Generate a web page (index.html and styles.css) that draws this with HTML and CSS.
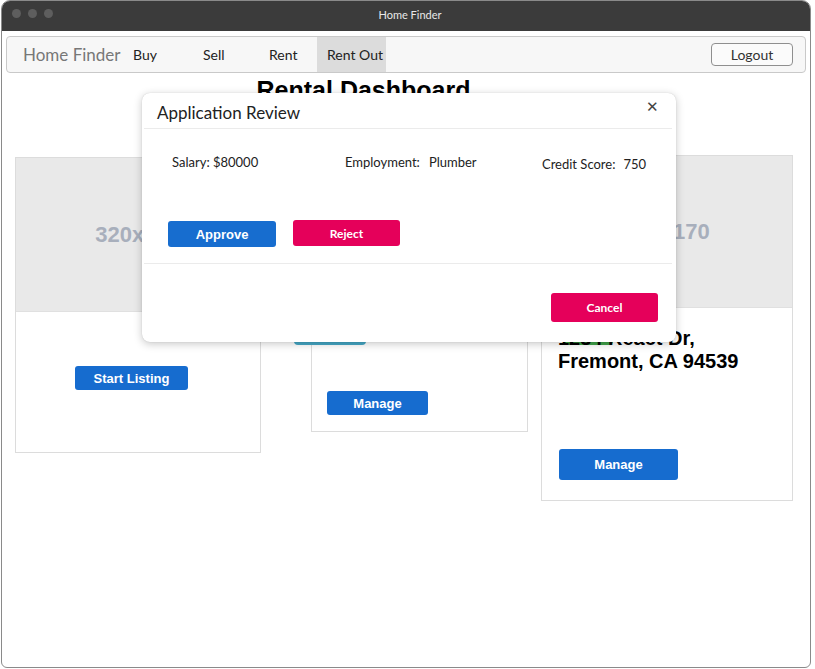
FILE: index.html
```html
<!DOCTYPE html>
<html>
<head>
<meta charset="utf-8">
<title>Home Finder</title>
<link rel="stylesheet" href="styles.css">
</head>
<body>
<div class="window">
  <div class="titlebar">
    <div class="dots"><span></span><span></span><span></span></div>
    <div class="wtitle">Home Finder</div>
  </div>
  <div class="app">
    <nav class="navbar">
      <span class="brand">Home Finder</span>
      <ul class="links">
        <li class="l-buy">Buy</li>
        <li class="l-sell">Sell</li>
        <li class="l-rent">Rent</li>
        <li class="l-out active">Rent Out</li>
      </ul>
      <button class="logout">Logout</button>
    </nav>
    <main class="dash">
      <h1 class="heading">Rental Dashboard</h1>
      <div class="cards">
        <div class="card c1">
          <div class="ph">320x170</div>
          <div class="cbody b1"><button class="btn blue sl">Start Listing</button></div>
        </div>
        <div class="card c2">
          <div class="ph">320x170</div>
          <span class="badge cyan"></span>
          <div class="cbody b2"><button class="btn blue mg">Manage</button></div>
        </div>
        <div class="card c3">
          <div class="ph ph3">320x170</div>
          <span class="badge green"></span>
          <div class="cbody b3">
            <div class="addr">1234 React Dr,<br>Fremont, CA 94539</div>
            <button class="btn blue mg3">Manage</button>
          </div>
        </div>
      </div>
    </main>
    <div class="modal">
      <div class="mhead">
        <span class="mtitle">Application Review</span>
        <span class="close">&#x2715;</span>
      </div>
      <div class="mbody">
        <div class="info">
          <span class="f1">Salary: $80000</span>
          <span class="f2">Employment:<span class="val">Plumber</span></span>
          <span class="f3">Credit Score:<span class="val">750</span></span>
        </div>
        <div class="actions">
          <button class="mbtn approve">Approve</button>
          <button class="mbtn reject">Reject</button>
        </div>
      </div>
      <div class="mfoot">
        <button class="mbtn cancel">Cancel</button>
      </div>
    </div>
  </div>
</div>
</body>
</html>
```
FILE: styles.css
```css
* { box-sizing: border-box; }
html, body { margin: 0; padding: 0; background: #ffffff; }
body { font-family: "Lato", "Liberation Sans", sans-serif; color: #222; }

.window {
  position: relative;
  margin-left: 1px;
  width: 810px;
  height: 668px;
  border: 1px solid #8a8a8a;
  border-radius: 9px 9px 6px 6px;
  overflow: hidden;
  background: #fff;
}

.titlebar {
  height: 30px;
  background: #3b3b3b;
  position: relative;
  display: flex;
  align-items: center;
  justify-content: center;
  padding-bottom: 3px;
}
.dots { position: absolute; left: 10px; top: 8px; display: flex; gap: 7px; }
.dots span { width: 9px; height: 9px; border-radius: 50%; background: #5e5e5e; display: block; }
.wtitle { color: #e8e8e8; font-size: 11px; font-family: "Lato", sans-serif; margin-left: 8px; }

.app { position: relative; padding-top: 1px; }

.navbar {
  margin: 4px 4px 0 4px;
  height: 37px;
  border: 1px solid #c9c9c9;
  border-radius: 4px;
  background: #f7f7f7;
  display: flex;
  align-items: stretch;
  padding-left: 16px;
  padding-right: 12px;
}
.brand { font-size: 17px; color: #777; align-self: center; width: 100px; }
.links { list-style: none; margin: 0; padding: 0; display: flex; align-items: stretch; }
.links li { font-size: 14px; color: #222; padding-left: 10px; display: flex; align-items: center; }
.l-buy { width: 70px; }
.l-sell { width: 66px; }
.l-rent { width: 58px; }
.l-out { width: 69px; }
.links li.active { background: #dcdcdc; }
.logout {
  margin-left: auto;
  align-self: center;
  width: 82px;
  height: 23px;
  border: 1px solid #8f8f8f;
  border-radius: 4px;
  background: #fbfbfb;
  font-family: "Lato", sans-serif;
  font-size: 14px;
  color: #333;
  padding: 0;
  margin-top: -1px;
}

.dash { padding: 0 0 0 13px; }
.heading {
  font-family: "Liberation Sans", Arial, sans-serif;
  font-weight: bold;
  font-size: 25px;
  margin: 3px 0 0 0;
  padding-right: 98px;
  text-align: center;
  color: #000;
}

.cards { display: flex; align-items: flex-start; margin-top: 52px; }
.card { position: relative; border: 1px solid #dcdcdc; background: #fff; }
.ph {
  height: 154px;
  background: #e9e9e9;
  display: flex;
  align-items: center;
  justify-content: center;
  color: #a8afbc;
  font-family: "Liberation Sans", Arial, sans-serif;
  font-weight: bold;
  font-size: 22px;
  border-bottom: 1px solid #e0e0e0;
}
.ph3 { height: 152px; }
.c1 { width: 246px; height: 296px; }
.c2 { width: 217px; height: 275px; margin-left: 50px; }
.c3 { width: 252px; height: 346px; margin-left: 13px; margin-top: -2px; }

.cbody { position: relative; }
.b1 { padding: 54px 0 0 59px; }
.b2 { padding: 79px 0 0 15px; }
.b3 { padding: 19px 0 0 16px; }

.btn {
  font-family: "Liberation Sans", Arial, sans-serif;
  font-weight: bold;
  font-size: 13px;
  color: #fff;
  border: none;
  border-radius: 3px;
  background: #166ccf;
  padding: 0;
  display: block;
}
.sl { width: 113px; height: 24px; }
.mg { width: 101px; height: 24px; }
.mg3 { width: 119px; height: 31px; margin-top: 76px; margin-left: 1px; }

.addr {
  position: relative;
  z-index: 1;
  font-family: "Liberation Sans", Arial, sans-serif;
  font-weight: bold;
  font-size: 20px;
  color: #000;
  line-height: 23px;
}

.badge { position: absolute; border-radius: 4px; display: block; }
.cyan { left: -18px; top: 157px; width: 72px; height: 30px; background: #45a8c6; }
.green { left: 21px; top: 168px; width: 50px; height: 21px; background: #41a44a; }

.modal {
  position: absolute;
  left: 140px;
  top: 62px;
  width: 534px;
  height: 249px;
  background: #fff;
  border-radius: 8px;
  box-shadow: 0 2px 8px rgba(0,0,0,0.22), 0 0 1px rgba(0,0,0,0.2);
  font-family: "Lato", sans-serif;
  z-index: 5;
}
.mhead {
  height: 36px;
  margin: 0 4px 0 2px;
  border-bottom: 1px solid #ebebeb;
  display: flex;
  align-items: center;
  padding-left: 13px;
  position: relative;
}
.mtitle { font-size: 17px; color: #222; margin-top: 4px; }
.close { position: absolute; right: 13px; top: 4px; font-size: 15px; color: #444; }
.mbody { height: 135px; margin: 0 4px 0 2px; border-bottom: 1px solid #ebebeb; padding-left: 28px; }
.info { display: grid; grid-template-columns: 173px 197px 1fr; padding-top: 25px; font-size: 13px; color: #222; }
.val { margin-left: 8px; }
.f2 .val { margin-left: 9px; }
.f3 { padding-top: 2px; }
.actions { display: flex; align-items: flex-start; margin-top: 48px; margin-left: -4px; gap: 17px; }
.mbtn { border: none; padding: 0; color: #fff; font-weight: bold; display: block; }
.approve {
  width: 108px; height: 26px; border-radius: 3px; background: #176dcf;
  font-family: "Liberation Sans", Arial, sans-serif; font-size: 13px; margin-top: 1px;
}
.reject {
  width: 107px; height: 26px; border-radius: 3px; background: #e5005a;
  font-family: "Lato", sans-serif; font-size: 12px;
}
.mfoot { display: flex; justify-content: flex-end; padding: 29px 18px 0 0; }
.cancel {
  width: 107px; height: 29px; border-radius: 3px; background: #e5005a;
  font-family: "Lato", sans-serif; font-size: 12px;
}
```
